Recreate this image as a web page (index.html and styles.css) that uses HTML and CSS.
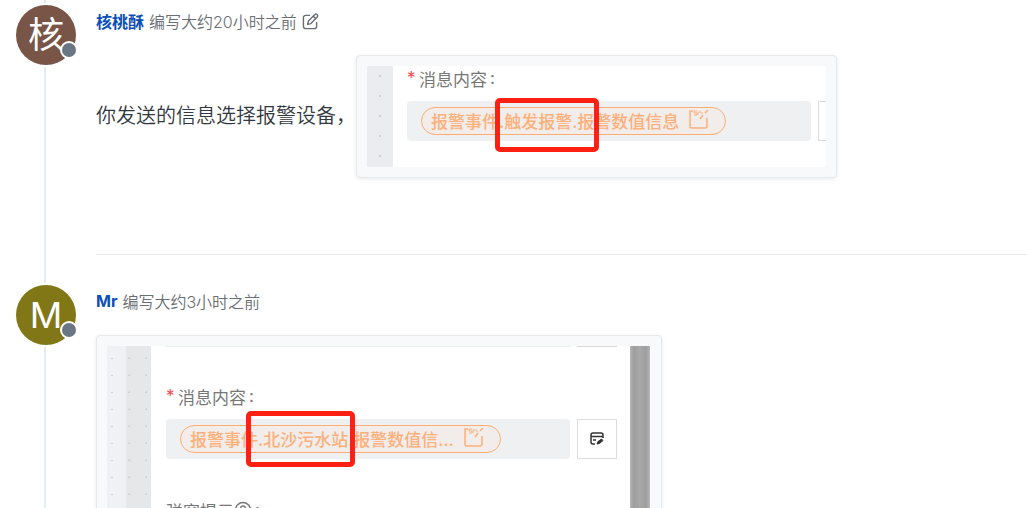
FILE: index.html
```html
<!DOCTYPE html>
<html lang="zh-CN">
<head>
<meta charset="utf-8">
<meta name="viewport" content="width=device-width, initial-scale=1">
<title>讨论</title>
<link rel="stylesheet" href="styles.css">
</head>
<body>
<main class="stream">
  <article class="post">
    <div class="rail">
      <span class="rail-stub"></span>
      <div class="avatar avatar-brown">核<span class="status"></span></div>
      <span class="rail-line"></span>
    </div>
    <div class="content content-first">
      <header class="meta">
        <a class="author" href="#">核桃酥</a>
        <span>编写大约20小时之前</span>
        <svg class="edit-icon" viewBox="0 0 18 18" fill="none" stroke="currentColor" stroke-width="1.5" stroke-linecap="round" stroke-linejoin="round"><path d="M8 2.500H4A2.500 2.500 0 0 0 1.500 5v9A2.500 2.500 0 0 0 4 16.500h9a2.500 2.500 0 0 0 2.500-2.500V10"/><path d="M6 12l.8-3.600L13.400 1.800a1.700 1.700 0 0 1 2.700 2.400L9.400 11.200 6 12z"/><path d="M12 3.500l2.500 2.300"/></svg>
      </header>
      <div class="message">
        <p class="text">你发送的信息选择报警设备，</p>
        <figure class="card">
          <div class="shot shot-small">
            <div class="gutter gutter-a"></div>
            <div class="form">
              <p class="label"><span class="star">*</span>消息内容<span class="colon">:</span></p>
              <div class="row">
                <div class="field">
                  <span class="pill">报警事件.触发报警.报警数值信息
                    <svg class="pill-icon" viewBox="0 0 20 20" fill="none" stroke="currentColor" stroke-width="1.500"><path d="M4 1H1v15q0 2 2 2h13q2 0 2-2V8"/><path d="M11 9l3-4M16 3l3-3" stroke-width="1.500"/><path d="M8 1H5v2h3v2H5M9 5V2h3M13 2v2" stroke-width="1"/></svg>
                  </span>
                  <span class="mark mark-one"></span>
                </div>
                <span class="action"></span>
              </div>
            </div>
          </div>
        </figure>
      </div>
      <hr class="divider">
    </div>
  </article>

  <article class="post">
    <div class="rail">
      <div class="avatar avatar-olive">M<span class="status"></span></div>
      <span class="rail-line"></span>
    </div>
    <div class="content">
      <header class="meta">
        <a class="author" href="#">Mr</a>
        <span>编写大约3小时之前</span>
      </header>
      <figure class="card card-second">
        <div class="shot shot-tall">
          <div class="gutter gutter-b"></div>
          <div class="gutter gutter-c"></div>
          <div class="form form-tall">
            <div class="row row-cut"><span class="cut-field"></span><span class="cut-action"></span></div>
            <p class="label"><span class="star">*</span>消息内容<span class="colon">:</span></p>
            <div class="row">
              <div class="field">
                <span class="pill">报警事件.北沙污水站.报警数值信...
                  <svg class="pill-icon" viewBox="0 0 20 20" fill="none" stroke="currentColor" stroke-width="1.500"><path d="M4 1H1v15q0 2 2 2h13q2 0 2-2V8"/><path d="M11 9l3-4M16 3l3-3" stroke-width="1.500"/><path d="M8 1H5v2h3v2H5M9 5V2h3M13 2v2" stroke-width="1"/></svg>
                </span>
                <span class="mark mark-two"></span>
              </div>
              <button class="action" type="button" aria-label="编辑">
                <svg class="action-icon" viewBox="0 0 16 16" fill="none" stroke="currentColor" stroke-width="1.500"><path d="M6 13H4q-2 0-2-2V4q0-2 2-2h8q2 0 2 2v3M2 5.500h12M4 9h3"/><path d="M8 13l1-2.500L12.500 8l1.500 1.500-3.500 3z" fill="currentColor" stroke-width="1"/></svg>
              </button>
            </div>
            <p class="label label-next">弹窗提示<svg class="info-icon" viewBox="0 0 18 18" fill="none" stroke="currentColor" stroke-width="1.500"><circle cx="9" cy="9" r="7.500"/><path d="M6.500 7.500a2.500 2.500 0 1 1 3.500 2.200q-1 .5-1 1.500M9 12.500v1.500"/></svg><span class="colon">:</span></p>
          </div>
          <div class="scrollbar"></div>
        </div>
      </figure>
    </div>
  </article>
</main>
</body>
</html>
```
FILE: styles.css
```css
* {
  box-sizing: border-box;
}

body {
  margin: 0;
  height: 100vh;
  overflow: hidden;
  background: #fff;
  color: #333840;
  font-family: Inter, "Noto Sans CJK SC", sans-serif;
  font-size: 16px;
}

p,
figure {
  margin: 0;
}

.stream {
  padding-left: 16px;
}

.post {
  display: flex;
  gap: 20px;
}

.rail {
  display: flex;
  flex-direction: column;
  flex: none;
  gap: 2px;
  width: 60px;
  padding-bottom: 2px;
}

.rail-stub,
.rail-line {
  width: 2px;
  margin-left: 28px;
  background: #e6ebf0;
}

.rail-stub {
  height: 3px;
}

.rail-line {
  flex: 1;
}

.avatar {
  position: relative;
  display: flex;
  align-items: center;
  justify-content: center;
  width: 60px;
  height: 60px;
  border-radius: 50%;
  color: #fff;
  font-size: 36px;
  line-height: 60px;
}

.avatar-brown {
  background: #795548;
}

.avatar-olive {
  background: #827717;
}

.status {
  position: absolute;
  right: -2px;
  bottom: 6px;
  width: 18px;
  height: 18px;
  border: 2px solid #fff;
  border-radius: 50%;
  background: #6b7684;
}

.content {
  flex: 1;
  min-width: 0;
  padding-top: 4px;
}

.content-first {
  padding-top: 9px;
}

.meta {
  display: flex;
  align-items: center;
  gap: 5px;
  height: 24px;
  color: #6a6e74;
  font-weight: 350;
}

.author {
  color: #0b4fb8;
  font-weight: 700;
  text-decoration: none;
}

.edit-icon {
  width: 17px;
  height: 17px;
}

.message {
  display: flex;
  align-items: center;
  padding-top: 22px;
}

.text {
  width: 260px;
  flex: none;
  padding-bottom: 4px;
  font-size: 20px;
  font-weight: 350;
  white-space: nowrap;
}

.card {
  padding: 10px;
  border: 1px solid #e6e9ec;
  border-radius: 4px;
  background: #f8f9fb;
  box-shadow: 0 1px 4px rgba(0, 0, 0, 0.08);
}

.card-second {
  width: fit-content;
  margin-top: 22px;
}

.divider {
  height: 1px;
  margin: 76px 0 30px;
  border: 0;
  background: #e8e8e8;
}

.shot {
  display: flex;
  overflow: hidden;
  background: #fff;
}

.shot-small {
  width: 459px;
  height: 101px;
}

.shot-tall {
  width: 544px;
  height: 240px;
}

.gutter {
  flex: none;
  width: 26px;
  background-color: #ebecf0;
  background-image: radial-gradient(circle at center, #cfd0d3 1px, transparent 1px);
  background-size: 26px 20px;
}

.gutter-b {
  width: 19px;
  background-color: #eff1f5;
  background-size: 10px 17px;
  background-position: 0 4px;
  background-repeat: repeat-y;
}

.gutter-c {
  width: 25px;
  background-color: #e6e7e9;
  background-size: 17px 17px;
  background-position: -5px 4px;
}

.form {
  flex: none;
  padding-left: 14px;
}

.form-tall {
  width: 479px;
  padding-left: 15px;
}

.label {
  display: flex;
  align-items: center;
  height: 24px;
  margin-bottom: 2px;
  color: #777;
  font-size: 17px;
}

.star {
  width: 12px;
  color: #f3474c;
}

.colon {
  padding-left: 3px;
}

.row {
  display: flex;
  gap: 7px;
  padding-top: 9px;
}

.field {
  position: relative;
  display: flex;
  align-items: center;
  width: 404px;
  height: 40px;
  padding-left: 14px;
  border-radius: 4px;
  background: #eff0f2;
}

.pill {
  display: flex;
  align-items: center;
  gap: 10px;
  height: 28px;
  padding: 0 16px 2px 9px;
  border: 1px solid #ffad70;
  border-radius: 14px;
  background: #f2edeb;
  color: #fcb07a;
  font-size: 17px;
  font-weight: 500;
  white-space: nowrap;
}

.pill-icon {
  width: 20px;
  height: 20px;
}

.mark {
  position: absolute;
  top: -3px;
  left: 88px;
  width: 104px;
  height: 54px;
  border: 5px solid #ff2014;
  border-radius: 5px;
}

.mark-two {
  top: -8px;
  left: 80px;
  width: 109px;
  height: 56px;
}

.action {
  display: flex;
  align-items: center;
  justify-content: center;
  flex: none;
  width: 40px;
  height: 40px;
  padding: 0;
  border: 1px solid #dcdcdc;
  background: #fff;
  color: #333;
}

.action-icon {
  width: 16px;
  height: 16px;
}

.row-cut {
  padding: 0 0 37px;
}

.cut-field,
.cut-action {
  width: 404px;
  height: 1px;
  background: #eceded;
}

.cut-action {
  width: 40px;
  background: #d8d8d8;
}

.label-next {
  margin-top: 39px;
}

.info-icon {
  width: 18px;
  height: 18px;
}

.scrollbar {
  flex: none;
  width: 20px;
  background: linear-gradient(90deg, #b5b5b5, #9e9e9e 20%, #a8a8a8 50%, #9e9e9e 80%, #b5b5b5);
}
```
